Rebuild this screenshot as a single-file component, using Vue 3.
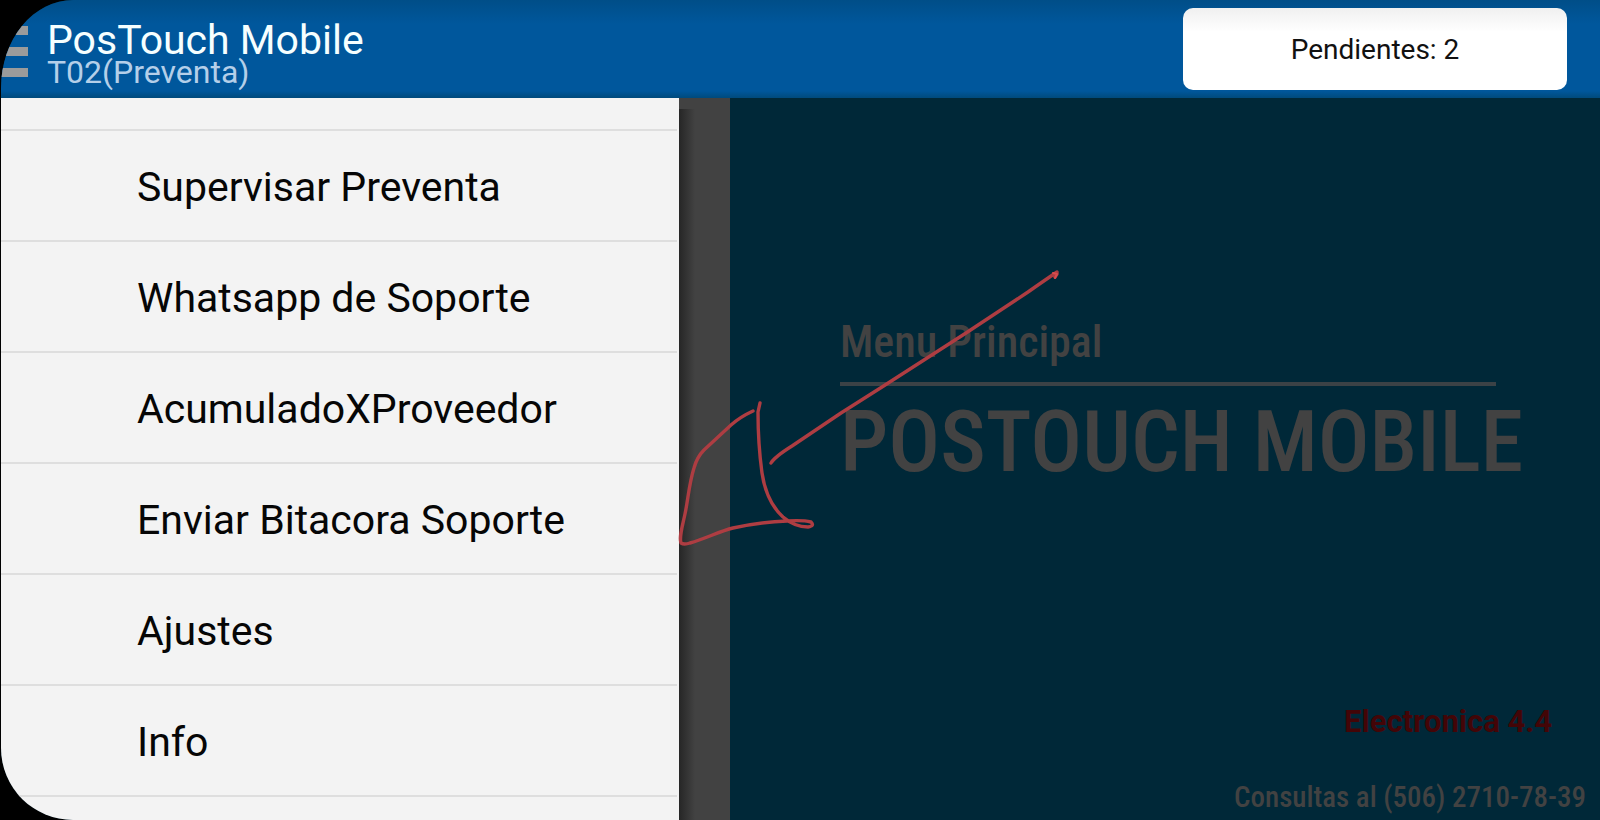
<script setup>
const items = [
  'Supervisar Preventa',
  'Whatsapp de Soporte',
  'AcumuladoXProveedor',
  'Enviar Bitacora Soporte',
  'Ajustes',
  'Info',
]
</script>

<template>
  <div class="device">
    <div class="screen">
      <header class="bar">
        <button class="toggle" type="button" aria-label="Menu">
          <span></span><span></span><span></span>
        </button>
        <div class="titles">
          <h1>PosTouch Mobile</h1>
          <p>T02(Preventa)</p>
        </div>
        <button class="pending" type="button">Pendientes: 2</button>
      </header>
      <div class="body">
        <nav class="drawer">
          <ul>
            <li v-for="item in items" :key="item"><a href="#">{{ item }}</a></li>
          </ul>
        </nav>
        <div class="strip"></div>
        <main class="home">
          <p class="section">Menu Principal</p>
          <hr />
          <h2>POSTOUCH MOBILE</h2>
          <p class="version">Electronica 4.4</p>
          <p class="contact">Consultas al (506) 2710-78-39</p>
        </main>
      </div>
    </div>
    <svg class="ink" viewBox="0 0 1600 820" preserveAspectRatio="none" aria-hidden="true">
      <g fill="none" stroke-linecap="round" stroke-linejoin="round">
        <g stroke="#ae3d42" stroke-width="3.4">
          <path d="M771 463C774 458 784 451 792 446L841 413L882 387L966 333L1028 292Q1048 278 1057 272L1057 274L1055 277" />
          <path d="M753 411Q740 417 731 425L704 450Q697 457 694 468C689 484 688 500 685 514C682 528 679 537 681 543Q684 545 690 543C707 538 720 531 733 528Q761 522 787 521Q803 520 811 522Q815 526 808 527C799 527 790 523 783 517C772 507 765 493 762 473Q758 444 758 412L760 403" />
        </g>
        <path d="M1053 273L1057 274L1055 278" stroke="#d94b4d" stroke-width="2" />
      </g>
    </svg>
  </div>
</template>

<style>
body {
  margin: 0;
  background: #000;
}
</style>

<style scoped>
.device {
  position: relative;
  min-height: 100vh;
  padding-left: 1px;
  box-sizing: border-box;
  display: flex;
  background: #000;
  font-family: Roboto, "Liberation Sans", sans-serif;
}
.screen {
  flex: 1;
  display: flex;
  flex-direction: column;
  overflow: hidden;
  border-radius: 72px 0 0 72px / 88px 0 0 72px;
  background: #002838;
}
.bar {
  display: flex;
  align-items: center;
  height: 98px;
  padding-right: 33px;
  box-sizing: border-box;
  background: linear-gradient(#004e88 0, #00579c 24px, #00579c 91px, #004a7c 98px);
}
.toggle {
  width: 27px;
  padding: 4px 0 0;
  border: 0;
  background: none;
  display: flex;
  flex-direction: column;
  gap: 12px;
}
.toggle span {
  height: 9px;
  background: #9b9b9b;
}
.titles {
  flex: 1;
  margin-left: 19px;
  padding-top: 10px;
}
h1,
h2,
p {
  margin: 0;
  font-weight: 400;
}
h1 {
  font-size: 41px;
  line-height: 36px;
  color: #f6ffff;
}
.titles p {
  font-size: 32px;
  line-height: 28px;
  color: #b4cfe9;
}
.pending {
  width: 384px;
  height: 82px;
  padding: 0;
  border: 0;
  border-radius: 10px;
  background: linear-gradient(#f0f0f0, #fff 24px);
  font-family: inherit;
  font-size: 28px;
  color: #111;
}
.body {
  flex: 1;
  display: grid;
  grid-template-columns: 678fr 51fr 870fr;
}
.drawer {
  background: #f3f3f3;
}
ul {
  list-style: none;
  margin: 0;
  padding: 31px 2px 22px 0;
}
li {
  border-top: 2px solid #dedede;
}
li:last-child {
  border-bottom: 2px solid #dedede;
}
li a {
  display: block;
  box-sizing: border-box;
  height: 109px;
  padding: 2px 0 0 136px;
  font-size: 41px;
  line-height: 109px;
  color: #060606;
  text-decoration: none;
}
.strip {
  background: linear-gradient(#424242, #424242) top / 100% 11px no-repeat,
    linear-gradient(90deg, #262626, #424242 16px);
}
.home {
  display: flex;
  flex-direction: column;
  padding: 216px 14px 0 110px;
  color: #424242;
  font-family: "Roboto Condensed", "Liberation Sans Narrow", "Liberation Sans", sans-serif;
}
.section {
  font-size: 44px;
  font-weight: 500;
  line-height: 56px;
}
hr {
  width: 88%;
  height: 4px;
  margin: 12px 0 10px;
  border: 0;
  background: #3b4246;
}
h2 {
  font-size: 86px;
  font-weight: 500;
  line-height: 92px;
  white-space: nowrap;
}
.version {
  margin-top: auto;
  padding-right: 34px;
  text-align: right;
  font-family: Roboto, sans-serif;
  font-size: 31px;
  font-weight: 700;
  line-height: 36px;
  color: #430507;
}
.contact {
  margin-top: 34px;
  text-align: right;
  font-size: 29px;
  font-weight: 500;
  line-height: 46px;
}
.ink {
  position: absolute;
  inset: 0;
  width: 100%;
  height: 100%;
  pointer-events: none;
}
</style>
